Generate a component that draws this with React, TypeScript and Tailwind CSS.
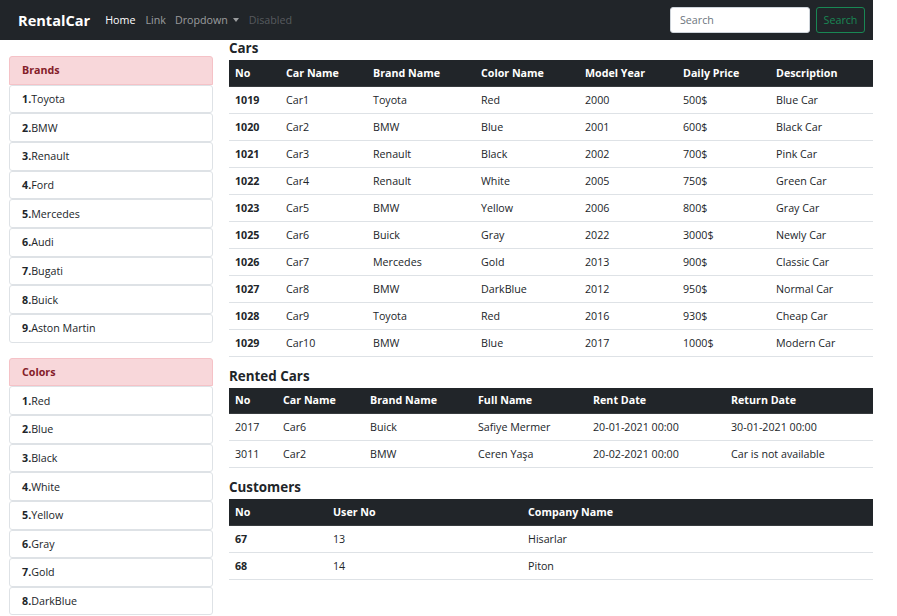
import React from "react";

const brands = ["Toyota", "BMW", "Renault", "Ford", "Mercedes", "Audi", "Bugati", "Buick", "Aston Martin"];
const colors = ["Red", "Blue", "Black", "White", "Yellow", "Gray", "Gold", "DarkBlue"];

const cars = [
  ["1019", "Car1", "Toyota", "Red", "2000", "500$", "Blue Car"],
  ["1020", "Car2", "BMW", "Blue", "2001", "600$", "Black Car"],
  ["1021", "Car3", "Renault", "Black", "2002", "700$", "Pink Car"],
  ["1022", "Car4", "Renault", "White", "2005", "750$", "Green Car"],
  ["1023", "Car5", "BMW", "Yellow", "2006", "800$", "Gray Car"],
  ["1025", "Car6", "Buick", "Gray", "2022", "3000$", "Newly Car"],
  ["1026", "Car7", "Mercedes", "Gold", "2013", "900$", "Classic Car"],
  ["1027", "Car8", "BMW", "DarkBlue", "2012", "950$", "Normal Car"],
  ["1028", "Car9", "Toyota", "Red", "2016", "930$", "Cheap Car"],
  ["1029", "Car10", "BMW", "Blue", "2017", "1000$", "Modern Car"],
];

const rented = [
  ["2017", "Car6", "Buick", "Safiye Mermer", "20-01-2021 00:00", "30-01-2021 00:00"],
  ["3011", "Car2", "BMW", "Ceren Yaşa", "20-02-2021 00:00", "Car is not available"],
];

const customers = [
  ["67", "13", "Hisarlar"],
  ["68", "14", "Piton"],
];

function ListGroup({ title, items }: { title: string; items: string[] }) {
  return (
    <div className="flex flex-col mb-[15px]">
      <div className="h-[28.67px] flex items-center pl-[12px] bg-[#f8d7da] border border-[#f5c2c7] rounded-t-[3px] text-[#842029] font-bold">
        {title}
      </div>
      {items.map((it, i) => (
        <div
          key={it}
          className="h-[28.67px] flex items-center pl-[12px] border border-[#dee2e6] rounded-[3px] bg-white text-[#212529]"
        >
          <span className="font-bold">{i + 1}.</span>
          <span>{it}</span>
        </div>
      ))}
    </div>
  );
}

function Table({
  headers,
  widths,
  rows,
  boldFirst,
}: {
  headers: string[];
  widths: number[];
  rows: string[][];
  boldFirst: boolean;
}) {
  return (
    <table className="w-full border-collapse mb-[11px] text-[#212529]">
      <colgroup>
        {widths.map((w, i) => (
          <col key={i} style={{ width: w ? `${w}px` : undefined }} />
        ))}
      </colgroup>
      <thead>
        <tr className="h-[26px] bg-[#212529] text-white">
          {headers.map((h) => (
            <th key={h} className="text-left font-bold px-[6px] py-0 border-b border-[#373b3e]">
              {h}
            </th>
          ))}
        </tr>
      </thead>
      <tbody>
        {rows.map((r, ri) => (
          <tr key={ri} className="h-[27px] border-b border-[#dee2e6]">
            {r.map((c, ci) => (
              <td key={ci} className={`px-[6px] py-0 ${ci === 0 && boldFirst ? "font-bold" : ""}`}>
                {c}
              </td>
            ))}
          </tr>
        ))}
      </tbody>
    </table>
  );
}

export default function App() {
  return (
    <div
      className="w-[873px] bg-white text-[10.7px] leading-[16px]"
      style={{ fontFamily: '"Open Sans", "Noto Sans", sans-serif' }}
    >
      <nav className="h-[40px] bg-[#212529] flex items-center pl-[18px] pr-[8px] pb-[1px]">
        <span className="text-white font-bold text-[14.6px] mr-[15px]">RentalCar</span>
        <span className="text-white mr-[10px]">Home</span>
        <span className="text-[rgba(255,255,255,0.55)] mr-[9px]">Link</span>
        <span className="text-[rgba(255,255,255,0.55)] flex items-center mr-[10px]">
          Dropdown
          <span className="ml-[5px] inline-block w-0 h-0 border-l-[3.5px] border-r-[3.5px] border-t-[4px] border-l-transparent border-r-transparent border-t-[rgba(255,255,255,0.55)]" />
        </span>
        <span className="text-[rgba(255,255,255,0.25)]">Disabled</span>
        <div className="ml-auto flex items-center">
          <div className="w-[140px] h-[26px] bg-white rounded-[3px] border border-[#ced4da] flex items-center pl-[9px] text-[#6c757d]">
            Search
          </div>
          <div className="ml-[6px] w-[49px] h-[26px] rounded-[3px] border border-[#198754] flex items-center justify-center text-[#198754]">
            Search
          </div>
        </div>
      </nav>
      <div className="flex">
        <div className="w-[204px] ml-[9px] mt-[16px] shrink-0">
          <ListGroup title="Brands" items={brands} />
          <ListGroup title="Colors" items={colors} />
        </div>
        <div className="ml-[16px] flex-1">
          <h5 className="h-[16px] mb-[4px] text-[13.4px] font-bold text-[#212529] leading-[16px]">Cars</h5>
          <Table
            headers={["No", "Car Name", "Brand Name", "Color Name", "Model Year", "Daily Price", "Description"]}
            widths={[51, 87, 108, 104, 98, 93, 0]}
            rows={cars}
            boldFirst
          />
          <h5 className="h-[16px] mb-[4px] text-[13.4px] font-bold text-[#212529] leading-[16px]">Rented Cars</h5>
          <Table
            headers={["No", "Car Name", "Brand Name", "Full Name", "Rent Date", "Return Date"]}
            widths={[48, 87, 108, 115, 138, 0]}
            rows={rented}
            boldFirst={false}
          />
          <h5 className="h-[16px] mb-[4px] text-[13.4px] font-bold text-[#212529] leading-[16px]">Customers</h5>
          <Table headers={["No", "User No", "Company Name"]} widths={[98, 195, 0]} rows={customers} boldFirst />
        </div>
      </div>
    </div>
  );
}
